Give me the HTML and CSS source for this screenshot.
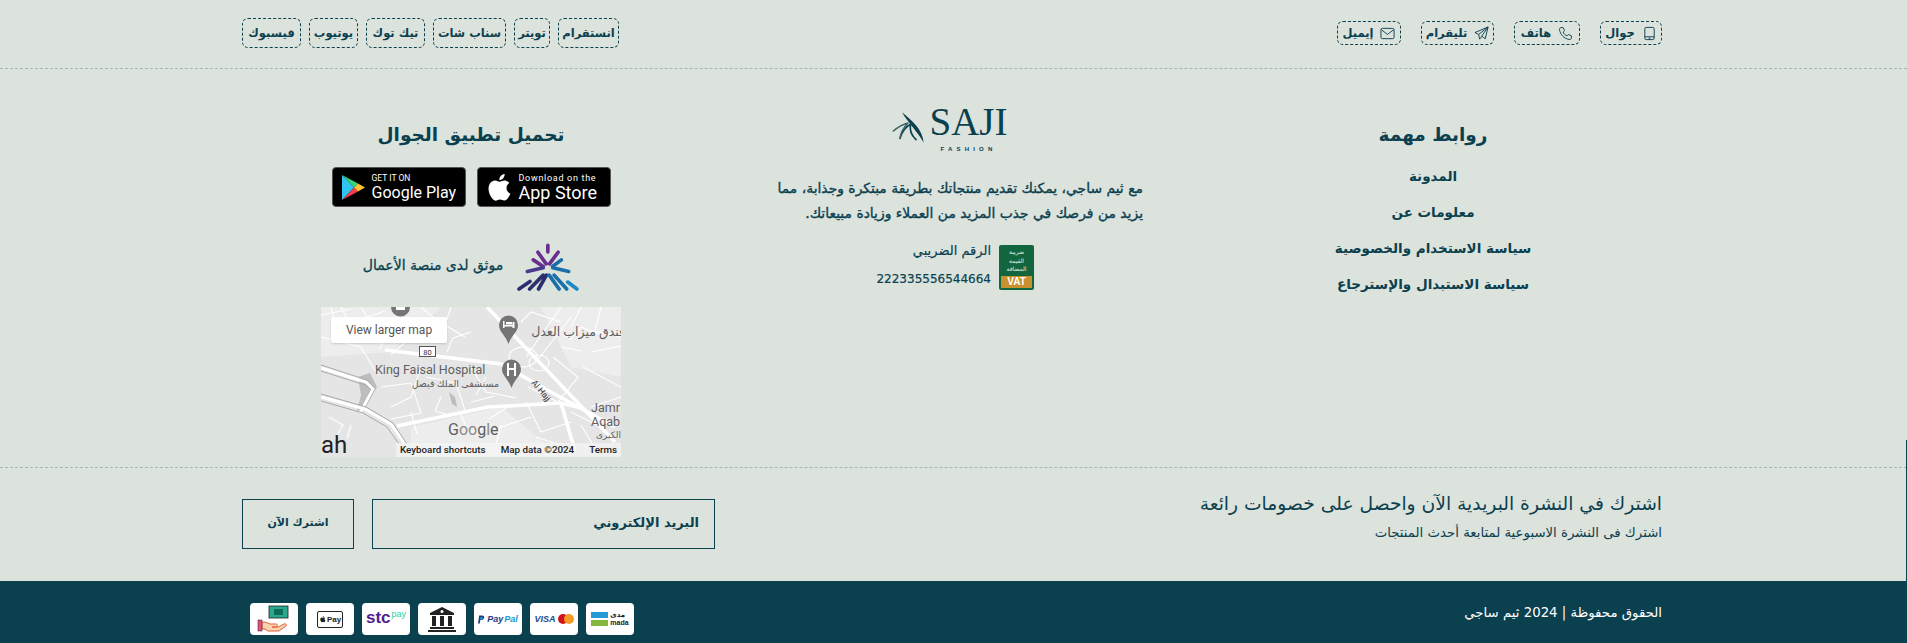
FILE: index.html
```html
<!DOCTYPE html>
<html lang="ar" dir="rtl">
<head>
<meta charset="utf-8">
<title>ثيم ساجي</title>
<link rel="stylesheet" href="styles.css">
</head>
<body>
<footer class="site-footer">
  <div class="edge-line"></div>

  <section class="topbar">
    <div class="wrap topbar-inner">
      <div class="contacts">
        <a class="chip chip-contact w-mobile">
          <svg class="chip-icon" viewBox="0 0 16 16"><rect x="3" y="1.500" width="10" height="13" rx="1.500"/><path d="M3 11.500h10M7 13h2"/></svg>
          <span>جوال</span>
        </a>
        <a class="chip chip-contact w-phone">
          <svg class="chip-icon" viewBox="0 0 16 16"><path d="M3 1.800 5.400 1.600 7 5 5.500 6.400C6.200 8.300 7.700 9.800 9.600 10.500L11 9l3.400 1.600-.2 2.400c-.1 1-1 1.600-2 1.400C6.700 13.600 2.400 9.300 1.600 3.800 1.400 2.800 2 1.900 3 1.800Z"/></svg>
          <span>هاتف</span>
        </a>
        <a class="chip chip-contact w-telegram">
          <svg class="chip-icon" viewBox="0 0 16 16"><path d="M15 1 1 7l4 2 1 5 2.500-3 3.500 2.500L15 1ZM5 9l10-8-7 10"/></svg>
          <span>تليقرام</span>
        </a>
        <a class="chip chip-contact w-mail">
          <svg class="chip-icon" viewBox="0 0 16 16"><rect x="1" y="2.500" width="14" height="11" rx="1.500"/><path d="m1.500 4 6.500 5 6.500-5"/></svg>
          <span>إيميل</span>
        </a>
      </div>
      <div class="socials">
        <a class="chip chip-social w-insta">انستقرام</a>
        <a class="chip chip-social w-tw">تويتر</a>
        <a class="chip chip-social w-snap">سناب شات</a>
        <a class="chip chip-social w-tik">تيك توك</a>
        <a class="chip chip-social w-yt">يوتيوب</a>
        <a class="chip chip-social w-fb">فيسبوك</a>
      </div>
    </div>
  </section>

  <section class="main">
    <div class="wrap main-grid">
      <div class="col col-links">
        <h3 class="col-title">روابط مهمة</h3>
        <ul class="links">
          <li>المدونة</li>
          <li>معلومات عن</li>
          <li>سياسة الاستخدام والخصوصية</li>
          <li>سياسة الاستبدال والإسترجاع</li>
        </ul>
      </div>

      <div class="col col-about">
        <div class="brand" dir="ltr">
          <svg class="brand-mark" viewBox="400 62 96 96">
            <path fill="#0b404f" d="M430 66C458 90 492 116 495 157 478 126 450 100 430 66Z"/>
            <path fill="none" stroke="#0b404f" stroke-width="5" stroke-linecap="round" stroke-linejoin="round" d="M424 144C430 124 444 108 456 102 452 118 456 132 472 148"/>
            <path fill="none" stroke="#3b626b" stroke-width="4.500" stroke-linecap="round" stroke-linejoin="round" d="M404 122C416 112 432 102 448 98 436 110 426 126 424 144"/>
          </svg>
          <div class="brand-text">
            <span class="brand-name">SAJI</span>
            <span class="brand-sub">FASHION</span>
          </div>
        </div>
        <p class="about-text">مع ثيم ساجي، يمكنك تقديم منتجاتك بطريقة مبتكرة وجذابة، مما<br>يزيد من فرصك في جذب المزيد من العملاء وزيادة مبيعاتك.</p>
        <div class="tax">
          <div class="vat-badge">
            <span class="vat-ar">ضريبة<br>القيمة<br>المضافة</span>
            <span class="vat-en" dir="ltr">VAT</span>
          </div>
          <div class="tax-text">
            <span>الرقم الضريبي</span>
            <span class="tax-num">222335556544664</span>
          </div>
        </div>
      </div>

      <div class="col col-app">
        <h3 class="col-title">تحميل تطبيق الجوال</h3>
        <div class="stores">
          <a class="store" dir="ltr">
            <svg class="store-apple" viewBox="0 0 24 24"><path d="M16.600 12.700c0-2.300 1.900-3.400 2-3.500-1.100-1.600-2.800-1.800-3.400-1.800-1.400-.1-2.800.9-3.500.9s-1.900-.9-3.100-.9C7 7.400 5.500 8.300 4.700 9.800c-1.700 2.900-.4 7.200 1.200 9.500.8 1.100 1.700 2.400 3 2.400 1.200-.1 1.700-.8 3.100-.8s1.900.8 3.100.7c1.300 0 2.100-1.100 2.900-2.300.9-1.300 1.300-2.600 1.300-2.700-.1 0-2.700-1-2.700-3.900ZM14.300 5.800c.6-.8 1.100-1.900 1-3-.9 0-2.100.6-2.800 1.400-.6.700-1.100 1.800-1 2.900 1.100.1 2.100-.5 2.800-1.300Z"/></svg>
            <span class="store-text"><span class="store-small store-small-wide">Download on the</span><span class="store-big">App Store</span></span>
          </a>
          <a class="store" dir="ltr">
            <svg class="store-play" viewBox="0 0 24 27">
              <path fill="#2fc4f2" d="M1 1v25l12-12.500Z"/>
              <path fill="#33d67c" d="M1 1l16 8.500-4 4Z"/>
              <path fill="#f0424a" d="M1 26l16-8.500-4-4Z"/>
              <path fill="#fdc231" d="M17 9.500 24 13.500 17 17.500 13 13.500Z"/>
            </svg>
            <span class="store-text"><span class="store-small">GET IT ON</span><span class="store-big store-big-play">Google Play</span></span>
          </a>
        </div>
        <div class="trust">
          <svg class="trust-mark" viewBox="585 398 185 145" fill="none" stroke-linecap="round" stroke-width="11">
            <path stroke="#6a2f8e" d="M677 405v20M647 426l25 35M708 426l-26 35M633 449l30 20"/>
            <path stroke="#4a3a8e" d="M615 484l48-11"/>
            <path stroke="#1a6fa8" d="M740 484l-48-11M718 449l-27 20"/>
            <path stroke="#2c2f6e" d="M590 537l33-23M622 537l41-42M649 537l24-42"/>
            <path stroke="#1a6fa8" d="M681 495l30 42M696 495l38 42"/>
            <path stroke="#1f8ac0" d="M737 516l28 21"/>
          </svg>
          <span class="trust-text">موثق لدى منصة الأعمال</span>
        </div>
        <div class="map" dir="ltr">
          <svg class="map-art" viewBox="0 0 300 150" preserveAspectRatio="none">
            <rect width="300" height="150" fill="#e5e5e5"/>
            <path fill="#ededed" d="M0 0h120l-50 45L0 50ZM220 0h80v70l-50-10ZM90 120l90-20 60 50H90Z"/>
            <path fill="#bdbdbd" d="M37 70l12-4 7 14-12 22-8 2 4-16ZM128 85l6 5 2 10-5-3Z"/>
            <g fill="none" stroke="#fff" stroke-width="1.100">
              <path d="M0 8l30-6M20 0l12 25 28-12M88 0l-30 42M60 20l30 10-20 18M60 80l30-4 10 30-30 6M105 70l30 6 10 30-25 4M150 60l15 25 30 6M232 50l25 20-20 25-30-15M205 95l15 30 30-10M240 0l-35 50M250 10l-35 45M200 15l10-10 30 10M0 30l40 10 15 25"/>
              <path d="M100 60l-10 30-20 10M210 110l-30 10M250 105l30 15M262 60l38 20M270 100l30-10"/>
              <path d="M10 0l4 14 14 6M40 0l6 10 18-6M100 0l12 10-8 14 14 6M130 0l-6 18 20 12M150 25l-18 6-6 14M230 22l20 10 10-12 20 8M260 0l-10 20M280 0l-6 24 26 6M240 40l20 4M270 45l30-6M165 70l-10 18M120 90l-6 14 14 4M90 105l6 22M140 108l8 18 20-6M180 118l-6 24M215 130l24 8M260 118l12 20M8 110l14 8-8 14M30 118l-4 14M168 112l22-14M150 95l24-6"/>
              <ellipse cx="202" cy="50" rx="14" ry="10"/><ellipse cx="218" cy="56" rx="10" ry="8"/>
            </g>
            <g fill="none" stroke="#fff" stroke-width="3.500">
              <path d="M166 0l128 135"/>
              <path d="M76 119l91-19 73-4 24 6"/>
              <path d="M64 43l116 14 50 28 64 35"/>
              <path d="M240 96l14 48"/>
            </g>
            <g fill="none" stroke="#aaa" stroke-width="1">
              <path d="M0 58l46 15 8 8-14 25"/><path d="M0 64l44 14 6 4-12 24"/>
            </g>
            <g fill="none" stroke="#fff" stroke-width="3">
              <path d="M0 61l45 14 7 7-13 24"/>
              <path d="M0 90l44 12 26 15 14 20"/>
            </g>
            <g fill="none" stroke="#a8a8a8" stroke-width="1">
              <path d="M0 87l45 13 27 16 14 21"/><path d="M0 94l42 12 24 14 12 17"/>
            </g>
            <path fill="#757575" d="M178 18a9.500 9.500 0 0 1 19 0c0 7-6.500 10-9.500 19-3-9-9.500-12-9.500-19Z"/>
            <path fill="#757575" d="M70 0h19a9.500 9.500 0 0 1-19 0Z"/>
            <path fill="#757575" d="M181 62a9.500 9.500 0 0 1 19 0c0 7-6.500 10-9.500 19-3-9-9.500-12-9.500-19Z"/>
            <path fill="#fff" d="M182 14h1.500v4h8v-3h2v6h-2v-1.500h-8V21H182ZM185 15h6v2.500h-6Z"/>
            <path fill="#fff" d="M186 56h2v5h5v-5h2v13h-2v-6h-5v6h-2Z"/>
            <path fill="#fff" d="M75 0h9v3h-9Z"/>
            <rect x="98.500" y="39.500" width="16" height="10" fill="#fff" stroke="#555"/>
            <text class="map-sign" x="106.500" y="47.500" text-anchor="middle">80</text>
            <text class="map-label" x="54" y="67">King Faisal Hospital</text>
            <text class="map-label-ar" x="178" y="80" text-anchor="end">مستشفى الملك فيصل</text>
            <text class="map-label-hotel" x="304" y="29" text-anchor="end">فندق ميزاب العدل</text>
            <text class="map-road" transform="translate(210 76) rotate(50)">Al Hajj</text>
            <text class="map-label" x="270" y="105">Jamr</text>
            <text class="map-label" x="270" y="119">Aqab</text>
            <text class="map-label-small" x="300" y="131" text-anchor="end">الكبرى</text>
            <text class="map-ah" x="0" y="146">ah</text>
            <text class="map-google" x="127" y="128">G<tspan class="map-g-light">oo</tspan>g<tspan class="map-g-light">l</tspan>e</text>
          </svg>
          <a class="map-larger">View larger map</a>
          <div class="map-attrib"><span>Keyboard shortcuts</span><span>Map data ©2024</span><span>Terms</span></div>
        </div>
      </div>
    </div>
  </section>

  <section class="newsletter">
    <div class="wrap newsletter-inner">
      <div class="news-copy">
        <h4>اشترك في النشرة البريدية الآن واحصل على خصومات رائعة</h4>
        <p>اشترك فى النشرة الاسبوعية لمتابعة أحدث المنتجات</p>
      </div>
      <form class="news-form">
        <div class="news-input">البريد الإلكتروني</div>
        <div class="news-btn">اشترك الآن</div>
      </form>
    </div>
  </section>

  <section class="bottom">
    <div class="wrap bottom-inner">
      <span class="copy">الحقوق محفوظة | 2024 ثيم ساجي</span>
      <div class="pays" dir="ltr">
        <div class="pay">
          <svg class="pay-svg" viewBox="0 0 48 32"><rect x="19" y="3" width="19" height="12" fill="#2aa88e" stroke="#222" stroke-width=".8"/><rect x="24" y="6" width="9" height="6" fill="#0d6b5a"/><path d="M12 19h3l5 2h6c2 0 2 3 0 3h-4 6l6-3c2-1 3 1 2 2l-7 5H18l-3-2h-3Z" fill="#fbd3b0" stroke="#e0603c" stroke-width="1"/><rect x="8" y="17" width="4" height="11" fill="#e74e84" stroke="#222" stroke-width=".5"/></svg>
        </div>
        <div class="pay">
          <div class="apple-pay"><svg class="ap-logo" viewBox="0 0 24 24"><path d="M16.600 12.700c0-2.300 1.900-3.400 2-3.500-1.100-1.600-2.800-1.800-3.400-1.800-1.400-.1-2.800.9-3.500.9s-1.900-.9-3.100-.9C7 7.400 5.500 8.300 4.700 9.800c-1.700 2.900-.4 7.200 1.200 9.500.8 1.100 1.700 2.400 3 2.400 1.200-.1 1.700-.8 3.100-.8s1.900.8 3.100.7c1.300 0 2.100-1.100 2.900-2.300.9-1.300 1.300-2.600 1.300-2.700-.1 0-2.700-1-2.700-3.900ZM14.300 5.800c.6-.8 1.100-1.900 1-3-.9 0-2.100.6-2.800 1.400-.6.700-1.100 1.800-1 2.900 1.100.1 2.100-.5 2.800-1.300Z"/></svg>Pay</div>
        </div>
        <div class="pay pay-stc"><span class="stc">stc</span><span class="stc-pay">pay</span></div>
        <div class="pay">
          <svg class="pay-svg" viewBox="0 0 48 32"><path fill="#222" d="M24 4 36 10v2H12v-2ZM14 13h4v10h-4ZM22 13h4v10h-4ZM30 13h4v10h-4ZM12 24h24v2H12ZM10 27h28v2H10Z"/><circle cx="24" cy="8.500" r="1.500" fill="#fff"/></svg>
        </div>
        <div class="pay pay-paypal">
          <svg class="pp-mark" viewBox="0 0 12 14"><path fill="#253b80" d="M2 0h5c3 0 4 2 3.500 4-.5 3-3 4-5 4H4l-1 6H0Z"/><path fill="#179bd7" d="M4 3h3c2 0 2 2 1 3-.6.700-1.500 1-3 1H3.500Z"/></svg>
          <span class="pp-a">Pay</span><span class="pp-b">Pal</span>
        </div>
        <div class="pay pay-visa"><span class="visa">VISA</span><svg class="mc" viewBox="0 0 24 15"><circle cx="7.500" cy="7.500" r="7.500" fill="#d3121c"/><circle cx="16.500" cy="7.500" r="7.500" fill="#f59a23"/></svg></div>
        <div class="pay pay-mada">
          <div class="mada-bars"><i class="bar-blue"></i><i class="bar-green"></i></div>
          <div class="mada-text"><span>مدى</span><span>mada</span></div>
        </div>
      </div>
    </div>
  </section>
</footer>
</body>
</html>
```
FILE: styles.css
```css
* { box-sizing: border-box; }
html, body { margin: 0; padding: 0; }
body {
  background: #dce3dd;
  color: #0b404f;
  font-family: "DejaVu Sans", "Noto Sans", sans-serif;
  overflow: hidden;
}
.site-footer { position: relative; width: 1907px; height: 643px; overflow: hidden; }
.edge-line { position: absolute; top: 440px; right: 0; width: 1px; height: 141px; background: #0b404f; }
.wrap { width: 1420px; margin-right: 245px; }

/* top bar */
.topbar { height: 69px; border-bottom: 1px dashed #a3b8b4; }
.topbar-inner { height: 66px; display: flex; justify-content: space-between; align-items: center; }
.contacts { display: flex; gap: 20px; }
.socials { display: flex; gap: 8px; }
.chip {
  display: flex; align-items: center; justify-content: center;
  border: 1px dashed #0b404f; border-radius: 6px;
  font-weight: 700; font-size: 11.500px; white-space: nowrap;
}
.chip-contact { height: 24px; gap: 7px; }
.chip-social { height: 30px; }
.chip-icon { width: 15px; height: 15px; fill: none; stroke: #0b404f; stroke-width: 1; flex: none; }
.w-mobile { width: 62px; }
.w-phone { width: 66px; }
.w-telegram { width: 73px; }
.w-mail { width: 64px; }
.w-insta { width: 61px; }
.w-tw { width: 36px; }
.w-snap { width: 73px; }
.w-tik { width: 59px; }
.w-yt { width: 49px; }
.w-fb { width: 59px; }

/* main columns */
.main { height: 399px; border-bottom: 1px dashed #a3b8b4; }
.main-grid { display: grid; grid-template-columns: 458px 504px 458px; height: 100%; }
.col { display: flex; flex-direction: column; align-items: center; }
.col-title { margin: 0; font-size: 18.500px; font-weight: 700; line-height: 28px; }
.col-links { padding-top: 52px; }
.col-app { padding-top: 52px; }
.links { list-style: none; margin: 9px 0 0; padding: 0; text-align: center; font-size: 13.500px; font-weight: 700; }
.links li { line-height: 36px; }

/* brand */
.col-about { padding-top: 36px; }
.brand { display: flex; align-items: flex-start; gap: 5px; height: 47px; margin-right: 4px; }
.brand-mark { width: 32px; height: 32px; margin-top: 6px; }
.brand-text { display: flex; flex-direction: column; align-items: center; }
.brand-name { font-family: "Liberation Serif", serif; font-size: 39px; line-height: 34px; }
.brand-sub { font-family: "Liberation Sans", sans-serif; font-size: 6px; font-weight: 700; letter-spacing: 4.200px; line-height: 8px; margin-top: 6px; }
.about-text {
  margin: 24px 61px 0 0; align-self: flex-start; width: 372px;
  font-size: 13.900px; font-weight: 400; -webkit-text-stroke: .35px #0b404f;
  line-height: 25px; text-align: right; white-space: nowrap;
}
.tax { align-self: flex-start; display: flex; gap: 8px; margin: 19px 170px 0 0; }
.vat-badge { width: 35px; height: 45px; background: #11663f; border-radius: 2px; display: flex; flex-direction: column; align-items: center; color: #e4f0e4; padding-top: 3px; }
.vat-ar { font-size: 6px; line-height: 8.500px; text-align: center; height: 28px; }
.vat-en { width: 31px; height: 12px; background: #c8912f; color: #fff; font-family: "Liberation Sans", sans-serif; font-size: 10px; font-weight: 700; line-height: 12px; text-align: center; }
.tax-text { display: flex; flex-direction: column; gap: 8px; margin-top: -4px; font-size: 13px; line-height: 20px; -webkit-text-stroke: .2px #0b404f; }
.tax-num { font-size: 12px; }

/* stores */
.stores { display: flex; gap: 11px; margin-top: 18px; }
.store { width: 134px; height: 40px; background: #000; border: 1px solid #555; border-radius: 4px; display: flex; align-items: center; color: #fff; }
.store-apple { width: 34px; height: 34px; margin-left: 5px; fill: #fff; flex: none; }
.store-play { width: 24px; height: 27px; margin-left: 8px; flex: none; }
.store-text { display: flex; flex-direction: column; margin-left: 7px; font-family: "Roboto", sans-serif; }
.store-apple + .store-text { margin-left: 2px; }
.store-small { font-size: 8.500px; line-height: 10px; }
.store-small-wide { font-size: 9px; letter-spacing: .7px; }
.store-big { font-size: 18px; line-height: 19px; }
.store-big-play { font-size: 16px; }

/* trust */
.trust { display: flex; align-items: center; gap: 14px; margin-top: 36px; width: 300px; justify-content: center; }
.trust-mark { width: 62px; height: 48px; flex: none; }
.trust-text { font-size: 14px; font-weight: 400; -webkit-text-stroke: .3px #0b404f; white-space: nowrap; padding-bottom: 4px; }

/* map */
.map { position: relative; width: 300px; height: 150px; margin-top: 16px; overflow: hidden; }
.map-art { display: block; width: 300px; height: 150px; }
.map-art text { font-family: "Roboto", "DejaVu Sans", sans-serif; fill: #5f5f5f; }
.map-art .map-sign { font-size: 7.500px; fill: #333; }
.map-label { font-size: 12.500px; }
.map-label-ar { font-size: 9.500px; }
.map-label-hotel { font-size: 12.500px; }
.map-label-small { font-size: 9px; }
.map-art .map-road { font-size: 8.500px; fill: #333; }
.map-art .map-ah { font-size: 24px; fill: #222; }
.map-google { font-size: 16px; }
.map-art .map-g-light { fill: #8b8b8b; }
.map-larger { position: absolute; top: 10px; left: 10px; width: 116px; height: 26px; background: #fff; border-radius: 2px; box-shadow: 0 1px 2px rgba(0,0,0,.15); font: 12px/26px "Roboto", sans-serif; color: #555; text-align: center; }
.map-attrib { position: absolute; right: 0; bottom: 0; height: 14px; width: 225px; padding: 0 4px; background: rgba(245,245,245,.7); display: flex; justify-content: space-between; font: 500 9.800px/14px "Roboto", sans-serif; color: #222; }

/* newsletter */
.newsletter { height: 113px; }
.newsletter-inner { display: flex; justify-content: space-between; padding-top: 23px; }
.news-copy h4 { margin: 0; font-size: 18.700px; line-height: 26px; font-weight: 400; }
.news-copy p { margin: 6px 0 0; font-size: 13.300px; line-height: 20px; }
.news-form { display: flex; gap: 18px; margin-top: 8px; }
.news-input, .news-btn { height: 50px; border: 1px solid #0b404f; font-weight: 700; line-height: 46px; }
.news-input { width: 343px; padding-right: 15px; font-size: 13px; }
.news-btn { width: 112px; text-align: center; font-size: 11px; }

/* bottom */
.bottom { height: 62px; background: #0b404f; color: #fff; }
.bottom-inner { display: flex; justify-content: space-between; align-items: flex-start; padding-top: 22px; }
.copy { font-size: 13.300px; line-height: 20px; }
.pays { display: flex; gap: 8px; margin-left: 8px; }
.pay { width: 48px; height: 32px; background: #fff; border-radius: 4px; display: flex; align-items: center; justify-content: center; color: #222; overflow: hidden; }
.pay-svg { width: 48px; height: 32px; }
.apple-pay { display: flex; align-items: center; border: 1px solid #222; border-radius: 2px; width: 26px; height: 17px; justify-content: center; font: 700 8px/15px "Liberation Sans", sans-serif; }
.ap-logo { width: 8px; height: 8px; fill: #222; }
.pay-stc { align-items: flex-start; padding-top: 5px; }
.stc { font: 700 17px/20px "Liberation Sans", sans-serif; color: #4f1f8f; }
.stc-pay { font: 400 9px/12px "Liberation Sans", sans-serif; color: #1fd0a3; margin-left: 1px; }
.pay-paypal { gap: 1px; font: italic 700 9px/12px "Liberation Sans", sans-serif; }
.pp-mark { width: 7px; height: 9px; margin-right: 1px; }
.pp-a { color: #253b80; }
.pp-b { color: #179bd7; }
.pay-visa { gap: 2px; }
.visa { font: italic 700 9px/12px "Liberation Sans", sans-serif; color: #1a4a8a; }
.mc { width: 16px; height: 10px; }
.pay-mada { gap: 2px; }
.mada-bars { display: flex; flex-direction: column; gap: 2px; }
.mada-bars i { display: block; width: 17px; height: 6px; }
.bar-blue { background: #259bd6; }
.bar-green { background: #84b740; }
.mada-text { display: flex; flex-direction: column; font: 700 7px/8px "Liberation Sans", "DejaVu Sans", sans-serif; color: #222; }
```
